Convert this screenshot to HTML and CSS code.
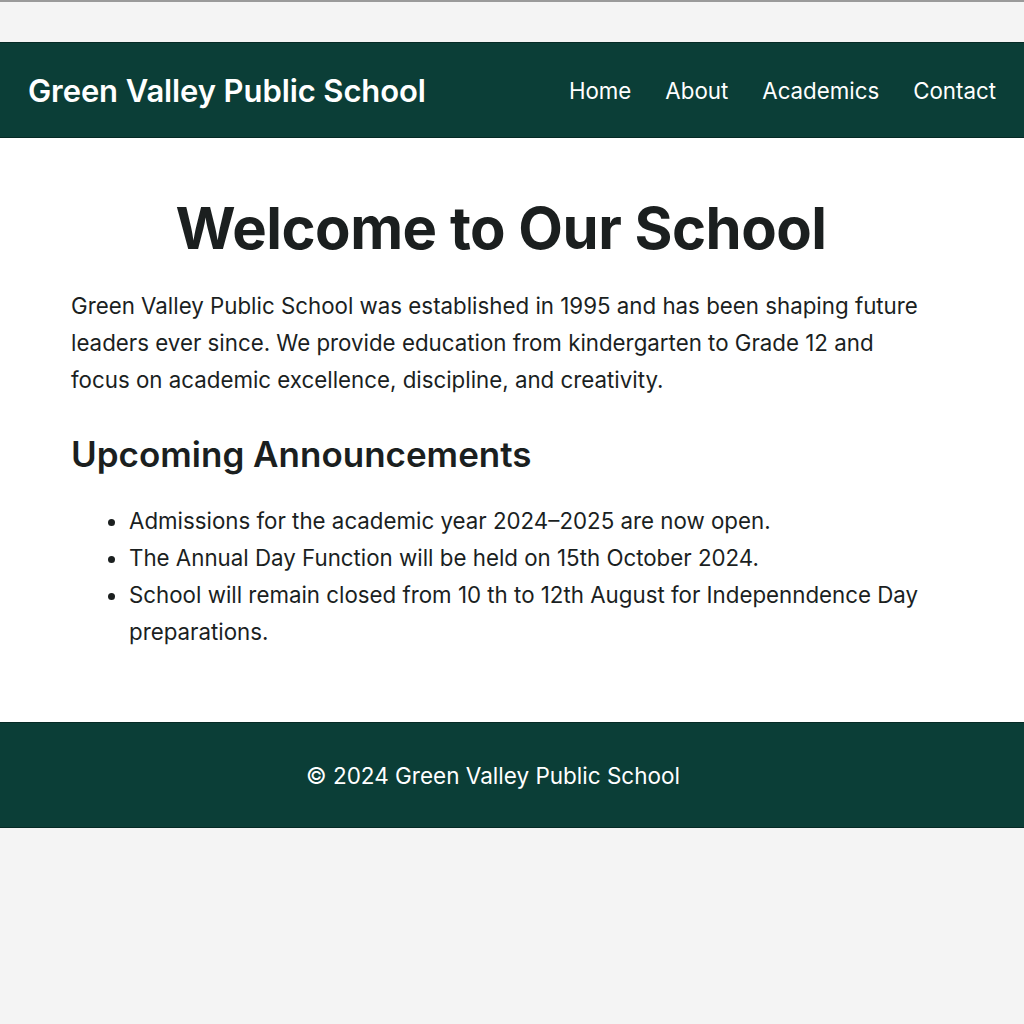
FILE: index.html
```html
<!DOCTYPE html>
<html lang="en">
<head>
<meta charset="utf-8">
<title>Green Valley Public School</title>
<link rel="stylesheet" href="styles.css">
</head>
<body>
<div class="topbar"></div>
<header class="site-header">
  <div class="logo">Green Valley Public School</div>
  <nav class="nav">
    <a href="#">Home</a>
    <a href="#">About</a>
    <a href="#">Academics</a>
    <a href="#">Contact</a>
  </nav>
</header>
<main class="content">
  <h1 class="title">Welcome to Our School</h1>
  <p class="intro">Green Valley Public School was established in 1995 and has been shaping future leaders ever since. We provide education from kindergarten to Grade 12 and focus on academic excellence, discipline, and creativity.</p>
  <h2 class="subtitle">Upcoming Announcements</h2>
  <ul class="announcements">
    <li>Admissions for the academic year 2024–2025 are now open.</li>
    <li>The Annual Day Function will be held on 15th October 2024.</li>
    <li>School will remain closed from 10 th to 12th August for Indepenndence Day preparations.</li>
  </ul>
</main>
<footer class="site-footer">© 2024 Green Valley Public School</footer>
</body>
</html>
```
FILE: styles.css
```css
* { box-sizing: border-box; }
html, body { margin: 0; padding: 0; }
body {
  background: #f4f4f4;
  font-family: Inter, "Noto Sans", sans-serif;
  color: #1b1f1f;
}
.topbar {
  height: 42px;
  border-top: 2px solid #9a9a9a;
  background: #f4f4f4;
}
.site-header {
  height: 96px;
  background: #0b3e37;
  border-top: 1px solid #062a25;
  border-bottom: 1px solid #062a25;
  display: flex;
  align-items: center;
  justify-content: space-between;
  padding: 0 28px 0 28px;
  color: #fff;
}
.logo {
  font-size: 31px;
  font-weight: 600;
  letter-spacing: -0.1px;
}
.nav {
  display: flex;
  gap: 34px;
}
.nav a {
  color: #fff;
  text-decoration: none;
  font-size: 22.3px;
}
.content {
  background: #fff;
  padding: 52px 93px 72px 71px;
}
.title {
  margin: 0;
  text-align: center;
  font-size: 58px;
  font-weight: 700;
  line-height: 76px;
  letter-spacing: -0.5px;
}
.intro {
  margin: 21px 0 0;
  font-size: 22.3px;
  line-height: 37px;
}
.subtitle {
  margin: 34px 0 0;
  font-size: 35px;
  font-weight: 600;
  line-height: 44px;
}
.announcements {
  margin: 26px 0 0;
  padding-left: 58px;
  font-size: 22.3px;
  line-height: 37px;
}
.site-footer {
  height: 106px;
  background: #0b3e37;
  border-top: 1px solid #062a25;
  border-bottom: 1px solid #062a25;
  color: #fff;
  font-size: 22.5px;
  display: flex;
  align-items: center;
  justify-content: center;
  padding-right: 38px;
}
```
